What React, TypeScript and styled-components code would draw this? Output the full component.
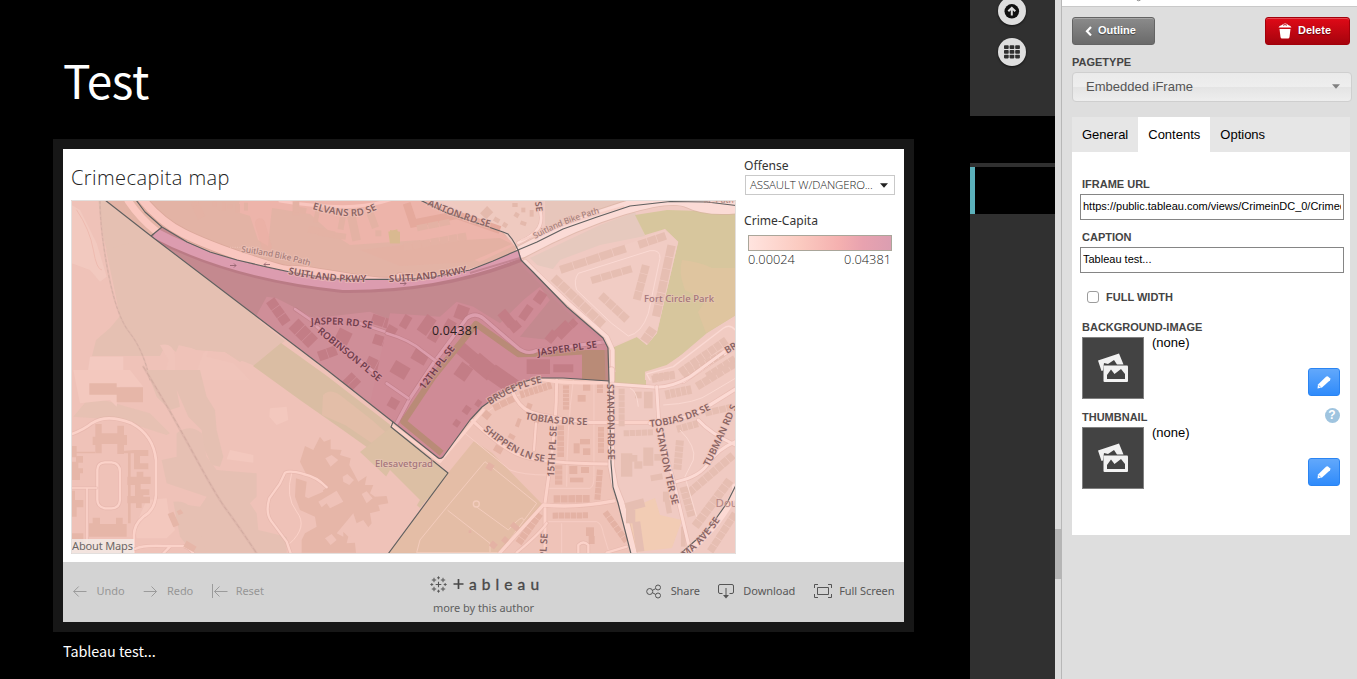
import React from "react";
import styled, { createGlobalStyle } from "styled-components";

const GlobalStyle = createGlobalStyle`
  * { box-sizing: border-box; }
  body { margin: 0; background: #000; overflow: hidden; font-family: "Liberation Sans", Arial, sans-serif; }
`;

const source = `"Noto Sans CJK SC", "Noto Sans", sans-serif`;
const viz = `"Noto Sans", "Open Sans", sans-serif`;

const Page = styled.div`
  display: flex;
  width: 1357px;
  height: 679px;
  overflow: hidden;
`;

/* ---------- stage ---------- */

const Stage = styled.main`
  width: 970px;
  padding-left: 53px;
  background: #000;
  color: #fff;
`;
const Heading = styled.h1`
  margin: 0;
  height: 139px;
  padding: 44px 0 0 10px;
  font: 400 46px/70px ${source};
  letter-spacing: -0.4px;
`;
const Frame = styled.section`
  display: flex;
  flex-direction: column;
  width: 861px;
  height: 493px;
  border: 10px solid #171717;
  background: #fff;
`;
const Caption = styled.p`
  margin: 0;
  padding: 7px 0 0 10px;
  font: 400 14.4px/24px ${source};
  letter-spacing: -0.05px;
`;
const Dashboard = styled.div`
  display: flex;
  height: 413px;
`;
const MapColumn = styled.div`
  width: 673px;
  padding-left: 8px;
`;
const MapTitle = styled.h2`
  margin: 0;
  height: 51px;
  font: 300 20px/57px "Open Sans", sans-serif;
  letter-spacing: 0.42px;
  color: #222;
`;
const MapSvg = styled.svg`
  display: block;
`;
const LegendColumn = styled.aside`
  width: 168px;
  padding: 9px 0 0 8px;
  color: #333;
`;
const LegendTitle = styled.div`
  font: 400 12.1px/16px ${viz};
`;
const OffenseSelect = styled.div`
  display: flex;
  align-items: center;
  justify-content: space-between;
  width: 150px;
  height: 20px;
  margin: 1px 0 18px 1px;
  padding: 0 6px 0 4px;
  border: 1px solid #c9c9c9;
  font: 300 11.5px/18px "Open Sans", sans-serif;
  letter-spacing: -0.15px;
  color: #222;
`;
const Ramp = styled.div`
  width: 144px;
  height: 16px;
  margin: 6px 0 0 4px;
  border: 1px solid #aaa69a;
  background: linear-gradient(90deg, #ffe4df, #fbcac0 36%, #f5b1b0 63%, #e8a2af 80%, #db9eb1);
`;
const RampScale = styled.div`
  display: flex;
  justify-content: space-between;
  width: 143px;
  margin-left: 4px;
  font: 300 12.8px/17px "Open Sans", sans-serif;
  color: #222;
`;

const Toolbar = styled.footer`
  display: flex;
  align-items: center;
  height: 60px;
  background: #d3d3d3;
  color: #606060;
  font: 400 11px/16px "Noto Sans", sans-serif;
  letter-spacing: -0.05px;
`;
const ToolGroup = styled.div<{ $w: number; $end?: boolean }>`
  display: flex;
  width: ${(p) => p.$w}px;
  justify-content: ${(p) => (p.$end ? "flex-end" : "flex-start")};
  padding: 0 9.5px 2px;
  gap: 18.4px;
`;
const Tool = styled.div<{ $muted?: boolean; $gap: number }>`
  display: flex;
  align-items: center;
  gap: ${(p) => p.$gap}px;
  color: ${(p) => (p.$muted ? "#969696" : "#585858")};
  white-space: nowrap;
`;
const Brand = styled.div`
  width: 112px;
  height: 60px;
  padding: 12px 0 0 1px;
`;
const Wordmark = styled.div`
  display: flex;
  align-items: center;
  height: 20px;
  color: #484848;
`;
const Letters = styled.span`
  display: flex;
  width: 70px;
  margin-left: 5px;
  justify-content: space-between;
  font: 400 15.5px/20px Lato, sans-serif;
  -webkit-text-stroke: 0.35px #484848;
`;
const Author = styled.div`
  padding: 6px 0 0 3px;
  white-space: nowrap;
`;

/* ---------- page rail ---------- */

const Rail = styled.nav`
  display: flex;
  flex-direction: column;
  width: 85px;
  background: #303030;
`;
const RailTools = styled.div`
  display: flex;
  flex-direction: column;
  align-items: center;
  gap: 13px;
  height: 119px;
  margin-top: -3px;
  padding-right: 1px;
  svg { filter: drop-shadow(0 1px 1px #111); }
`;
const RailSlide = styled.div<{ $active?: boolean }>`
  height: 47px;
  margin-bottom: 4px;
  background: #000;
  border-left: ${(p) => (p.$active ? "5px solid #5bb0ba" : "0")};
`;
const Splitter = styled.div`
  display: flex;
  flex-direction: column;
  width: 7px;
  padding-top: 529px;
  background: #dcdcdc;
  border-right: 1px solid #b7b7b7;
`;
const Grip = styled.div`
  width: 7px;
  height: 50px;
  background: #b5b5b5;
`;

/* ---------- inspector ---------- */

const Inspector = styled.aside`
  width: 295px;
  background: #dedede;
`;
const Strip = styled.div`
  height: 7px;
  padding-left: 74px;
  background: #fff;
  border-bottom: 1px solid #c9c9c9;
  svg { display: block; }
`;
const Actions = styled.div`
  display: flex;
  justify-content: space-between;
  padding: 10px 7px 0 10px;
`;
const Button = styled.button<{ $danger?: boolean }>`
  display: flex;
  align-items: center;
  gap: 6px;
  width: ${(p) => (p.$danger ? 85 : 83)}px;
  height: 28px;
  padding: 0 0 2px 12px;
  border: 1px solid ${(p) => (p.$danger ? "#a3000a" : "#646464")};
  border-radius: 3px;
  background: ${(p) => (p.$danger ? "linear-gradient(#e00a17, #a5030d)" : "linear-gradient(#8b8b8b, #6a6a6a)")};
  box-shadow: inset 0 1px 0 rgba(255, 255, 255, 0.25);
  color: #fff;
  font: 700 11px/14px "Liberation Sans", Arial, sans-serif;
  text-shadow: 0 1px 1px rgba(0, 0, 0, 0.45);
  svg { margin-top: 2px; }
`;
const Label = styled.div<{ $top?: number }>`
  margin-top: ${(p) => p.$top ?? 0}px;
  font: 700 11px/14px "Liberation Sans", Arial, sans-serif;
  color: #444;
`;
const TypeField = styled.div`
  padding: 10px 0 0 10px;
`;
const TypeSelect = styled.div`
  display: flex;
  align-items: center;
  justify-content: space-between;
  width: 280px;
  height: 30px;
  margin-top: 3px;
  padding: 0 11px 1px 13px;
  border: 1px solid #cfcfcf;
  border-radius: 4px;
  background: linear-gradient(#eaeaea, #eeeeee 50%, #e4e4e4 51%, #eeeeee);
  font-size: 13px;
  color: #555;
`;
const Tabs = styled.div`
  display: flex;
  width: 278px;
  height: 35px;
  margin: 15px 0 0 10px;
  background: #e6e6e6;
`;
const Tab = styled.div<{ $active?: boolean }>`
  padding: 0 10px;
  background: ${(p) => (p.$active ? "#fff" : "transparent")};
  font-size: 13px;
  line-height: 35px;
  color: #000;
`;
const Sheet = styled.div`
  width: 278px;
  height: 383px;
  margin-left: 10px;
  padding: 25px 6px 0 10px;
  background: #fff;
`;
const Input = styled.div`
  width: 264px;
  height: 26px;
  margin: 3px 0 0 -2px;
  padding: 0 2px;
  border: 1px solid #858585;
  font-size: 11px;
  line-height: 23px;
  color: #000;
  white-space: nowrap;
  span { display: block; overflow: hidden; }
`;
const CheckRow = styled.label`
  display: flex;
  align-items: center;
  gap: 7px;
  margin: 17px 0 16px 5px;
`;
const CheckBox = styled.span`
  width: 12px;
  height: 12px;
  border: 1px solid #9c9c9c;
  border-radius: 3px;
`;
const ImageHeader = styled.div`
  display: flex;
  justify-content: space-between;
  height: 17px;
  padding-right: 4.500px;
`;
const ImageRow = styled.div`
  display: flex;
  height: 62px;
  margin-bottom: 11px;
`;
const Thumb = styled.div`
  display: flex;
  width: 62px;
  height: 62px;
  border: 1px solid #808080;
  background: #434343;
`;
const None = styled.div`
  flex: 1;
  padding-left: 8px;
  margin-top: -2px;
  font-size: 13px;
  line-height: 16px;
  color: #000;
`;
const EditButton = styled.button`
  display: flex;
  align-items: center;
  justify-content: center;
  width: 32px;
  height: 28px;
  margin: 31px 4px 0 0;
  padding: 0;
  border: 1px solid #2a84f2;
  border-radius: 3px;
  background: linear-gradient(#62a8fb, #2f8bfb);
`;
const Help = styled.div`
  width: 15px;
  height: 15px;
  margin-top: -2px;
  border-radius: 50%;
  background: #9fc4df;
  color: #fff;
  font: 700 12px/15px "Liberation Sans", Arial, sans-serif;
  text-align: center;
`;

/* ---------- map ---------- */

type PathProps = { d: string; c: string; w?: number; o?: number };
const Road = ({ d, c, w = 6, o }: PathProps) => (
  <path d={d} stroke={c} strokeWidth={w} fill="none" strokeLinecap="round" strokeLinejoin="round" opacity={o} />
);
const Cased = ({ d, c, w = 10, edge = "#dfaea4" }: PathProps & { edge?: string }) => (
  <>
    <Road d={d} c={edge} w={w + 4} o={0.45} />
    <Road d={d} c={c} w={w} />
  </>
);
/* rectangular buildings: x, y, width, height, angle */
const Blocks = ({ c, items }: { c: string; items: number[][] }) => (
  <g fill={c}>
    {items.map(([x, y, w, h, a = 0], i) => (
      <rect key={i} x={x - w / 2} y={y - h / 2} width={w} height={h} transform={`rotate(${a} ${x} ${y})`} />
    ))}
  </g>
);
const Row = ({ x1, y1, x2, y2, n, c, s = 20 }: { x1: number; y1: number; x2: number; y2: number; n: number; c: string; s?: number }) => {
  const a = (Math.atan2(y2 - y1, x2 - x1) * 180) / Math.PI;
  const len = Math.hypot(x2 - x1, y2 - y1) / n;
  return (
    <Blocks
      c={c}
      items={Array.from({ length: n }, (_, i) => {
        const t = (i + 0.5) / n;
        return [x1 + (x2 - x1) * t, y1 + (y2 - y1) * t, len - 2, s, a];
      })}
    />
  );
};

type LabelProps = { id: string; d: string; t: string; s?: number; c?: string; halo?: string; len?: number; w?: number };
const RoadLabel = ({ id, d, t, s = 9.7, c = "#8a6564", halo = "#efc5bc", len, w = 600 }: LabelProps) => (
  <>
    <path id={id} d={d} fill="none" />
    <text fontSize={s} fill={c} stroke={halo} strokeWidth={2} strokeOpacity={0.55} paintOrder="stroke" fontWeight={w} textLength={len}>
      <textPath href={`#${id}`} textLength={len}>{t}</textPath>
    </text>
  </>
);

const tract =
  "M151 236L162 227L187 242L210 252L237 260L267 267L290 272L320 277L343 279.3L393 279.3L427 278L470 270L493 261L518.3 250L523 262L533 272L567 307L603 338L608 348L609 381L563 378L537 378L523 382L500 394L482 407L470 420L443 457Q440 460 437 457L397 425L390 419L327 370Z";
const parkway = "M136 200L145 212L162 227L187 242L210 252L237 260L267 267L290 272L320 277L343 279.3L393 279.3L427 278L470 270L493 261L518.3 250";

const MapView = () => {
  const bW = "#e6b6a8";
  const bE = "#e6beb2";
  const bS = "#e4b2a4";
  const bT = "#c37d86";
  const rW = "#fbd2c9";
  const rE = "#fcdad4";
  const rT = "#dc9dac";
  return (
    <MapSvg width="665" height="354" viewBox="71 200 665 354" fontFamily={`"Noto Sans", "Open Sans", sans-serif`}>
      <defs>
        <clipPath id="tract"><path d={tract} /></clipPath>
      </defs>
      <rect x="71" y="200" width="665" height="354" fill="#efc3b8" />

      {/* ground */}
      <path d="M105 200L151 236L327 370L393 422L391 427L448 473L388 554H71V200Z" fill="#efc2b8" />
      <path d="M98 200H105L258 318L270 342L240 362L225 352L196 350L180 342L176 352L166 344L160 356H92L96 340L110 328L120 316L108 255L104 240Z" fill="#e5c0b2" />
      <path d="M151 236L285 341L255 366L240 360L225 352L200 350L178 345L168 350L150 352L120 315L106 250Z" fill="#e5c0b2" />
      <path d="M281 343L327 376L393 427L448 473L430 500L385 460L340 428L300 400L253 366Z" fill="#dabda3" />
      <path d="M323 395Q330 388 340 395L372 420L400 445L385 452L345 425L322 415Z" fill="#e3bea8" />
      <path d="M105 200H426L447 213L477 223L503 232L512 238L518 250L470 272L343 282L210 254L162 228L151 236Z" fill="#e3b3a5" />
      <path d="M240 200H440L500 231L515 245L480 262L420 240L350 245L330 232L310 214L272 208L268 246L258 240L250 216L237 212Z" fill="#edb4aa" />
      <path d="M430 242L500 238L512 244L470 262L400 266L360 250Z" fill="#e4b1a3" />
      <path d="M426 200H736V554H630L618 503L612 487L609 380L603 338L567 307L523 262L518 250L503 232Z" fill="#f0cac2" />
      <path d="M450 200H545L540 225L518 243L505 230L470 218Z" fill="#efcac0" />
      <path d="M545 200H640L560 228L545 232Z" fill="#e7c6bb" />
      <path d="M530 258L600 225L635 212L645 236L600 245L560 260L548 275Z" fill="#e6c9be" />
      <path d="M635 215L667 210L736 212V315L707 333L667 367L646 372L644 382H617L612 348L637 337L647 345L657 333L678 242L665 229L645 235Z" fill="#d7c69d" />
      <path d="M682 260Q700 262 712 268H736V315L706 333L698 312L706 300L685 290Q678 272 682 260Z" fill="#dfc59f" />
      <path d="M608 372H646V385H612Z" fill="#d7c69d" />
      <path d="M474 441L492 453L543 505L500 554H388L448 473Z" fill="#e4bda6" />
      <path d="M391 427L448 473L420 508L390 480L360 452Z" fill="#dcbfa4" />
      <path d="M390 470L420 500L388 554H340Z" fill="#efc2b8" />
      <path d="M626 510L655 498L660 515L682 520L672 548L636 552Z" fill="#f2ccb4" />

      {/* north-west tile */}
      <g transform="translate(60 190) scale(.3333)">
        <path d="M35 45L60 60L90 120L110 160L140 260L120 275L90 240L35 220Z" fill="#f3cbc1" opacity=".8" />
        <path d="M90 500H190V570H80Z" fill="#f3c9c0" />
        <path d="M300 465Q340 455 345 500V570H310L325 510ZM430 490Q450 470 440 500L520 520L570 570H400Z" fill="#f0c4ba" />
        <Road d="M50 60Q90 120 100 180T125 240" c="#eebbb0" w={3} />
        <Road d="M120 33Q120 120 145 250T210 430T270 570" c="#d8b0a5" w={5} o={0.5} />
        <path d="M120 33Q120 120 145 250T210 430T270 570" stroke="#ccaaa0" strokeWidth="2" strokeDasharray="9 7" fill="none" />
        <Road d="M205 33Q240 85 290 125T420 195" c="#fbc8c0" w={22} />
        <Road d="M240 20Q300 95 370 130T560 205T690 240T860 262T1020 262" c="#d69d92" w={30} o={0.5} />
        <Road d="M240 20Q300 95 370 130T560 205T690 240T860 262T1020 262" c="#f9c6bf" w={25} />
        <Road d="M660 33Q760 50 850 50T1020 20" c="#f9c6bf" w={9} />
        <Road d="M600 100L620 170" c="#eaaea1" w={30} o={0.5} />
        <Blocks c={bS} items={[[415, 62, 24, 48, -25], [405, 42, 20, 12, -10], [464, 42, 14, 14], [492, 50, 12, 24], [510, 50, 16, 12], [533, 55, 14, 26], [558, 50, 12, 24], [708, 55, 20, 42], [720, 60, 38, 18, 10], [770, 78, 14, 40, 10], [768, 122, 46, 20, 10], [800, 130, 50, 20, 10], [840, 138, 36, 18, 8], [845, 100, 18, 38, 10], [882, 115, 26, 76, -12], [938, 90, 22, 50, -20], [955, 130, 18, 18]]} />
        <path d="M985 125L1012 118L1020 160L990 160Z" fill="#d9b990" />
        <path d="M510 172H590" stroke="#f2cabf" strokeWidth="2" strokeDasharray="3 4" />
      </g>

      {/* north-east tile */}
      <g transform="translate(390 190) scale(.3333)">
        <path d="M0 120L30 125V160H0Z" fill="#d9b990" />
        <path d="M50 40L70 100L200 75L330 120" stroke="#e5a99c" strokeWidth="24" fill="none" />
        <Row x1={40} y1={172} x2={230} y2={138} n={7} c={bS} s={22} />
        <Row x1={80} y1={115} x2={180} y2={95} n={3} c={bS} s={18} />
        <Blocks c="#e4b9ac" items={[[290, 68, 26, 30, 45], [320, 90, 18, 14, 30], [345, 105, 14, 14, 30], [375, 45, 16, 12], [400, 60, 12, 14], [400, 100, 18, 12, 20], [425, 70, 12, 20], [380, 75, 14, 14, 30]]} />
        <Cased d="M445 40Q462 90 445 115T385 158" c={rE} w={8} />
        <Road d="M395 185Q550 100 700 55T900 36T1060 50" c="#d8b0a2" w={43} o={0.6} />
        <Road d="M395 185Q550 100 700 55T900 36T1060 50" c="#fbdbd6" w={37} />
        <Road d="M395 150Q540 95 700 50" c="#f6cfc7" w={6} />
        <Road d="M230 245L330 215L385 185" c="#f9c6bf" w={12} />
        <path d="M400 215L500 240L745 150L825 118L865 155L800 430L770 465L740 440L660 470L640 440Z" fill="#f1ccc4" />
        <Row x1={510} y1={240} x2={708} y2={175} n={5} c={bE} s={24} />
        <Row x1={745} y1={165} x2={828} y2={137} n={3} c={bE} s={24} />
        <Row x1={603} y1={272} x2={726} y2={236} n={4} c={bE} s={22} />
        <Row x1={490} y1={262} x2={640} y2={405} n={7} c={bE} s={26} />
        <Row x1={632} y1={315} x2={712} y2={390} n={4} c={bE} s={24} />
        <Row x1={768} y1={225} x2={740} y2={330} n={4} c={bE} s={24} />
        <Row x1={845} y1={165} x2={798} y2={380} n={6} c={bE} s={25} />
        <Row x1={790} y1={415} x2={762} y2={455} n={2} c={bE} s={28} />
        <path d="M565 250L780 182Q812 178 810 205L775 370Q755 430 715 438L665 400L560 300Q550 270 565 250Z" fill="none" stroke="#fad9d3" strokeWidth="3" />
        <Cased d="M405 215L440 250L535 340L650 440L668 480V570" c={rE} w={12} />
        <path d="M765 545L830 525L1036 385V570H765Z" fill="#f1cbc2" />
        <Row x1={790} y1={562} x2={855} y2={552} n={4} c={bE} s={20} />
        <Row x1={870} y1={548} x2={1010} y2={450} n={8} c={bE} s={24} />
        <Row x1={950} y1={560} x2={1036} y2={505} n={5} c={bE} s={22} />
        <Road d="M780 570L770 552L850 530L1000 415Q1020 400 1036 420" c="#fad9d3" w={4} />
        <Cased d="M880 575L990 500L1040 470" c={rE} w={9} />
      </g>

      {/* south-west tile */}
      <g transform="translate(60 370) scale(.3333)">
        <path d="M90 80L150 95L200 110L270 130L330 190L320 195L180 150L40 140Z" fill="#e5c0b2" opacity=".8" />
        <path d="M260 0H420L440 80L465 120L470 180L490 260L480 290L455 285L430 230L425 180L385 140L350 60L360 110L330 120L290 80Z" fill="#e5c0b2" />
        <path d="M350 190Q390 160 425 190L440 260L470 300L590 310V380L570 400L590 430L595 480L680 500V548H440L400 530L350 450L345 400L420 410L440 380L320 340L305 270L350 260Z" fill="#e6c0b3" />
        <path d="M340 395Q390 390 400 430L440 548H400L360 500Z" fill="#e6c0b3" />
        <path d="M225 470L260 390L320 385L325 420L345 480L320 505H230ZM630 115L680 110L685 150L650 165L628 140ZM510 240L580 255V278L500 268ZM40 0H210L250 50H180L170 110L150 90L60 100Z" fill="#f3c8be" />
        <Road d="M250 -10Q330 120 400 250T500 420T590 550" c="#d9b1a6" w={7} o={0.6} />
        <path d="M250 -10Q330 120 400 250T500 420T590 550" stroke="#cfa89d" strokeWidth="2.5" strokeDasharray="14 8" fill="none" />
        <path d="M88 40H170V52H249V97H170V74H88Z" fill={bW} />
        <path d="M106 162H125V190H172V167H192V195H201V225H192V252H172V222H125V250H106V225H98V200H106Z" fill={bW} />
        <path d="M36 228H50V245H105V250H50V262H36ZM48 258H69V278H55V295H69V310H60V330H36V275H48ZM222 240H265V258H240V280H265V298H222V250H180V244ZM202 320H230V305H250V320H272V342H242V358H268V375H250V380H270V400H245V414H228V400H202V378H225V345H202ZM36 362H45V390H70V412H50V440H36ZM87 460H98V443H120V462H168V443H188V462H200V500H87ZM36 490H70V520H36ZM204 250H212V460H204Z" fill={bW} />
        <Cased d="M36 192Q70 180 95 160Q140 130 215 160Q280 195 288 270V375Q285 420 250 440Q220 465 222 500V548" c={rW} w={8} />
        <Cased d="M112 300Q112 278 135 277H155Q180 280 180 305V390Q178 415 155 415H135Q112 410 112 390Z" c={rW} w={7} />
        <Cased d="M36 354H110M81 356V540" c={rW} w={5} />
        <Cased d="M225 537Q250 525 310 528H370Q390 535 400 550M330 530L310 550" c={rW} w={7} />
        <path d="M323 432L340 425L358 465L340 472ZM350 424L362 418L370 430L356 436ZM380 512L410 530L400 546L370 530Z" fill={bW} />
        <path d="M735 228L760 240L780 200L792 215L812 208V238L845 240L840 255L872 265L868 285L895 335L920 318L915 345L940 345L930 370L945 380L980 378L985 400L955 405L960 422L930 430L935 460L925 472L910 450L890 460L880 430L830 490L850 500V485L865 500L860 520L885 518L888 548H725V510L735 490L770 470L765 440L720 420L705 380L708 325L740 335L735 380L790 360L805 350L765 322L740 315L720 275Z" fill={bW} />
        <path d="M796 265L815 255L835 270L812 290ZM848 320L862 312L882 330L868 345L850 335ZM905 372L920 364L938 385L920 400ZM795 505L815 492L830 510L812 525ZM775 395L830 362L850 395L810 415L800 400L785 412ZM735 380L785 345L790 365L745 385Z" fill="#efc2b8" />
        <Road d="M695 310Q675 380 710 425T690 520" c={rW} w={3} />
        <Cased d="M800 352Q770 320 730 312Q690 300 675 308L660 340L628 385Q615 430 635 455L680 515L692 550" c={rW} w={7} />
      </g>

      {/* south-east tile */}
      <g transform="translate(390 370) scale(.3333)">
        <path d="M285 275L440 400L330 548H80L90 510L180 400Z" fill="none" stroke="#f3ccbd" strokeWidth="3" />
        <path d="M173 421L300 520V548M260 411L355 480Q400 430 400 450" fill="none" stroke="#f3ccbd" strokeWidth="3" />
        <circle cx="259" cy="402" r="9" fill="none" stroke="#f3ccbd" strokeWidth="4" />
        <path d="M225 190L360 300Q400 315 470 315M285 130Q350 80 410 70M550 30Q530 180 530 350M470 355H600Q612 350 612 320V40M475 455H620Q635 460 640 490L655 540M515 460V548" fill="none" stroke="#f6cdc4" strokeWidth="3" />
        <Row x1={390} y1={75} x2={485} y2={45} n={7} c={bS} s={22} />
        <Row x1={310} y1={115} x2={372} y2={85} n={3} c={bS} s={20} />
        <Row x1={528} y1={45} x2={528} y2={120} n={6} c={bS} s={18} />
        <Row x1={512} y1={165} x2={512} y2={262} n={6} c={bS} s={20} />
        <Row x1={506} y1={285} x2={506} y2={345} n={4} c={bS} s={22} />
        <Row x1={630} y1={40} x2={630} y2={70} n={2} c={bS} s={18} />
        <Row x1={633} y1={170} x2={633} y2={250} n={5} c={bS} s={18} />
        <Row x1={630} y1={298} x2={622} y2={390} n={5} c={bS} s={18} />
        <Row x1={490} y1={387} x2={600} y2={386} n={5} c={bS} s={22} />
        <Row x1={487} y1={437} x2={595} y2={436} n={6} c={bS} s={18} />
        <Row x1={645} y1={425} x2={710} y2={515} n={6} c={bS} s={18} />
        <Row x1={385} y1={520} x2={450} y2={430} n={6} c={bS} s={22} />
        <Blocks c={bS} items={[[290, 135, 22, 22, 40], [325, 238, 26, 20, 30], [418, 108, 16, 16, 20], [440, 150, 14, 20], [365, 200, 20, 14, 30], [385, 158, 12, 26, 20], [590, 50, 22, 24], [575, 85, 24, 20], [585, 215, 30, 16], [560, 235, 18, 30], [590, 245, 22, 20], [550, 300, 24, 24], [585, 300, 24, 18], [560, 330, 40, 14], [600, 485, 24, 26], [605, 510, 18, 24], [375, 470, 26, 16, 40], [300, 290, 20, 20, 30], [310, 525, 20, 18, 40], [345, 510, 16, 18, 40], [240, 485, 8, 8]]} />
        <Cased d="M500 30Q500 160 480 290L465 400V548" c={rW} w={9} />
        <Cased d="M365 60Q385 110 420 125T600 157H780" c={rW} w={10} />
        <Cased d="M240 145Q340 240 400 260T655 282" c={rW} w={9} />
        <Cased d="M330 548L460 405Q560 415 672 393" c={rW} w={10} />
        <Cased d="M438 160L432 240M380 548Q450 490 470 460M565 548V525Q580 510 595 525V548M650 548L710 530" c={rW} w={7} />
        <Road d="M275 110Q310 75 360 45T460 28T655 38" c={rW} w={10} />
        <Road d="M5 165L150 275L170 250L280 120" c={rW} w={9} />
        <Road d="M664 0V290L675 350L695 400L732 550" c="#dfb0a5" w={22} o={0.5} />
        <Road d="M664 0V290L675 350L695 400L732 550" c={rE} w={17} />
        <Row x1={695} y1={55} x2={695} y2={170} n={6} c={bE} s={18} />
        <Row x1={700} y1={190} x2={790} y2={187} n={5} c={bE} s={18} />
        <Row x1={785} y1={28} x2={855} y2={15} n={4} c={bE} s={22} />
        <Row x1={880} y1={20} x2={1000} y2={-50} n={7} c={bE} s={22} />
        <Row x1={825} y1={75} x2={905} y2={58} n={5} c={bE} s={26} />
        <Row x1={920} y1={50} x2={1036} y2={-20} n={6} c={bE} s={24} />
        <Row x1={860} y1={178} x2={925} y2={160} n={4} c={bE} s={22} />
        <Row x1={945} y1={130} x2={1030} y2={110} n={4} c={bE} s={20} />
        <Row x1={870} y1={210} x2={862} y2={300} n={5} c={bE} s={24} />
        <Row x1={895} y1={370} x2={1030} y2={255} n={8} c={bE} s={24} />
        <Row x1={880} y1={350} x2={905} y2={440} n={5} c={bE} s={24} />
        <Row x1={915} y1={470} x2={1020} y2={330} n={8} c={bE} s={26} />
        <Row x1={960} y1={545} x2={1036} y2={430} n={6} c={bE} s={22} />
        <Blocks c={bE} items={[[745, 75, 20, 20], [775, 90, 26, 50], [710, 285, 34, 70], [730, 265, 24, 20], [775, 260, 30, 55], [745, 285, 24, 22], [800, 322, 36, 18, -10], [828, 380, 18, 30], [835, 410, 16, 40, -10], [735, 405, 58, 26, -15], [722, 440, 28, 40], [745, 500, 24, 90, -8], [880, 500, 14, 60], [808, 262, 30, 20]]} />
        <path d="M820 105Q920 100 960 70L1036 25M870 180Q920 230 910 270L885 320L920 440M720 55Q740 60 745 110" fill="none" stroke="#f9d8d1" strokeWidth="3" />
        <Cased d="M665 42L800 52Q850 50 900 20L1010 -60" c={rE} w={9} />
        <Cased d="M800 50L808 180L850 330L895 520L905 548" c={rE} w={9} />
        <Cased d="M780 160Q900 150 960 105L1040 55" c={rE} w={10} />
        <Cased d="M860 335Q930 320 955 280T1036 215M925 150Q960 190 1036 225" c={rE} w={9} />
        <Road d="M880 560Q960 490 1000 430T1036 350" c={rE} w={20} />
      </g>

      {/* highlighted tract */}
      <g clipPath="url(#tract)">
        <path d={tract} fill="#c4898f" />
        <g transform="translate(60 190) scale(.3333)">
          <path d="M590 375L620 320L650 325L700 350L760 385L930 365L1020 400L1100 395L1200 560L1060 800L560 560Z" fill="#cf8e98" />
          <Row x1={630} y1={330} x2={680} y2={400} n={3} c={bT} s={30} />
          <Row x1={700} y1={400} x2={760} y2={460} n={3} c={bT} s={42} />
          <Row x1={775} y1={500} x2={830} y2={480} n={2} c={bT} s={30} />
          <Row x1={935} y1={385} x2={1010} y2={410} n={2} c={bT} s={30} />
          <Row x1={940} y1={445} x2={1000} y2={465} n={2} c={bT} s={30} />
          <Row x1={830} y1={430} x2={870} y2={450} n={1} c={bT} s={40} />
          <Row x1={920} y1={510} x2={980} y2={540} n={2} c={bT} s={30} />
          <Row x1={860} y1={560} x2={890} y2={590} n={2} c={bT} s={40} />
          <Cased d="M705 357L760 395M900 400L1020 440L1120 490" c={rT} w={8} edge="#b5757f" />
          <Cased d="M770 410L960 560L1020 610L1060 640" c={rT} w={8} edge="#b5757f" />
        </g>
        <g transform="translate(390 190) scale(.3333)">
          <path d="M0 370L150 380L200 335L250 350L330 400L400 330L450 290L480 330L390 440L480 450L560 385L650 450V600H500L300 640L150 820L-60 640Z" fill="#cf8b96" />
          <Blocks c={bT} items={[[215, 368, 38, 42, 20], [180, 405, 30, 30, 30], [47, 395, 24, 40, 30], [110, 405, 34, 56, 35], [5, 420, 30, 24, 30], [350, 385, 30, 50, -40], [375, 410, 32, 26, -40], [408, 368, 24, 46, 35], [450, 322, 28, 36, 35], [520, 420, 50, 34, -45], [485, 440, 26, 36, 40], [550, 400, 20, 22, -45], [520, 535, 60, 24], [445, 530, 70, 44], [230, 490, 60, 40, 40], [280, 530, 70, 50, 40], [340, 570, 90, 50, 35], [220, 545, 40, 46, 35], [90, 500, 46, 36, 30], [130, 440, 30, 26, 30], [30, 540, 50, 40, 30], [230, 660, 20, 24, 35], [200, 700, 18, 20, 35], [265, 640, 16, 20, 35], [10, 640, 30, 30, 30]]} />
          <path d="M155 790L40 695L130 560L258 402L385 492L480 490L580 484" stroke="#b98b77" strokeWidth="19" strokeLinejoin="round" fill="none" />
          <path d="M576 480H665V578L576 568Z" fill="#b98b77" />
          <Road d="M20 700L60 625L130 520L230 385Q255 365 280 385L385 475Q410 495 440 482L650 455" c="#b5757f" w={14} o={0.5} />
          <Road d="M20 700L60 625L130 520L230 385Q255 365 280 385L385 475Q410 495 440 482L650 455" c={rT} w={10} />
          <Cased d="M-10 430Q60 450 100 485L140 515M-10 580L55 625" c={rT} w={8} edge="#b5757f" />
        </g>
        <path d="M155 234Q230 275 343 287Q440 288 520 256" fill="none" stroke="#b4717f" strokeWidth="12" opacity=".6" />
        <path d="M155 233Q230 273 343 285Q440 286 520 253" fill="none" stroke="#dc9caf" strokeWidth="10" />
        <path d="M470 273L520 258" stroke="#c48593" strokeWidth="2" />
      </g>
      <path d="M523 262L533 272L567 307L603 338L608 348L609 380" fill="none" stroke="#c98a96" strokeWidth="3" opacity=".5" transform="translate(-2 1)" />

      {/* tract outlines */}
      <g fill="none" stroke="#5f5f5f" strokeWidth="1.15" strokeLinejoin="round">
        <path d="M105 200L151 236L162 227M151 236L327 370L393 422L391 427L448 473L388 554" />
        <path d="M393 422L437 457Q440 460 443 457L470 420L482 407L500 394L523 382L537 378L563 378L609 381" />
        <path d={parkway} />
        <path d="M518 250L537 242L563 229L597 217L630 206L670 201.5L707 202L736 205.5" />
        <path d="M420 200L447 213L477 223L503 232L508 234L512 239L515 244L518 250L521 260L533 272L567 307L603 338L608 348L609 381L611 463L613 487L618 503L631 554" />
        <path d="M680 554L696 540L710 527L727 503L736 485" />
      </g>

      {/* labels */}
      <RoadLabel id="l1" d="M312 209Q345 219 362 215T386 202" t="ELVANS RD SE" len={67} />
      <RoadLabel id="l2" d="M427 205Q444 213 462 219T496 229" t="ANTON RD SE" len={66} />
      <RoadLabel id="l3" d="M241 252Q280 257 313 267" t="Suitland Bike Path" s={8.5} c="#a67e7b" w={500} len={70} />
      <RoadLabel id="l4" d="M288 274Q330 283 369 282" t="SUITLAND PKWY" c="#82555a" len={79} />
      <RoadLabel id="l5" d="M389 282Q430 281 470 272" t="SUITLAND PKWY" c="#82555a" len={79} />
      <RoadLabel id="l6" d="M535 239Q565 222 604 212" t="Suitland Bike Path" s={8.5} c="#a6827c" w={500} len={70} />
      <RoadLabel id="l7" d="M535 202L537 216" t="SE" s={9} />
      <RoadLabel id="l8" d="M311 325Q345 323 373 329" t="JASPER RD SE" c="#713f4d" halo="#d793a1" len={61} />
      <RoadLabel id="l9" d="M317 332L381 384" t="ROBINSON PL SE" c="#713f4d" halo="#d793a1" len={79} />
      <RoadLabel id="l10" d="M424 390L457 346" t="12TH PL SE" c="#713f4d" halo="#d793a1" len={52} />
      <RoadLabel id="l11" d="M538 356L600 347" t="JASPER PL SE" c="#713f4d" halo="#d793a1" len={60} />
      <RoadLabel id="l12" d="M490 405Q515 388 545 382" t="BRUCE PL SE" len={57} />
      <RoadLabel id="l13" d="M525 419Q555 425 592 425" t="TOBIAS DR SE" len={63} />
      <RoadLabel id="l14" d="M483 430Q520 462 548 462" t="SHIPPEN LN SE" len={70} />
      <RoadLabel id="l15" d="M554 477L557 424" t="15TH PL SE" len={51} />
      <RoadLabel id="l16" d="M607 384L608 462" t="STANTON RD SE" len={76} />
      <RoadLabel id="l17" d="M650 427Q685 424 715 407" t="TOBIAS DR SE" len={64} />
      <RoadLabel id="l18" d="M656 428Q663 470 673 508" t="STANTON TER SE" len={79} />
      <RoadLabel id="l19" d="M709 467Q723 440 738 404" t="TUBMAN RD S" len={67} />
      <RoadLabel id="l20" d="M546 558L548 530" t="PL SE" />
      <RoadLabel id="l21" d="M685 558Q708 540 724 514" t="MA AVE SE" len={52} />
      <RoadLabel id="l22" d="M727 354L742 345" t="BR" />
      <g stroke="#eec9c0" strokeWidth="1.5" strokeOpacity=".5" paintOrder="stroke" fill="#a3757a" fontWeight="500">
        <text x="644" y="301.5" fontSize="9.5" textLength="70">Fort Circle Park</text>
        <text x="375" y="467" fontSize="9.5" textLength="58">Elesavetgrad</text>
        <text x="715.5" y="507" fontSize="11.5" fill="#b38583" fontWeight="400">Dou</text>
      </g>
      <text x="704" y="203" fontSize="8.5" fill="#a6827c">ke Path</text>
      <path d="M230 265.5h6m-2-2l2 2l-2 2M270 264.5h-6m2-2l-2 2l2 2M400 283.5h6m-2-2l2 2l-2 2" stroke="#8c5d68" strokeWidth=".8" fill="none" />
      <text x="432" y="335" fontSize="12.3" fontWeight="400" fill="#2b1d20" fontFamily={`"Open Sans", sans-serif`} textLength="47">0.04381</text>

      <rect x="71" y="539" width="63" height="14" fill="#f4ece8" fillOpacity=".8" />
      <text x="72" y="550" fontSize="11" fill="#6c6665" textLength="61">About Maps</text>
      <path d="M71.5 200.5H735.5V553.5H71.5Z" fill="none" stroke="#e3dfdd" />
    </MapSvg>
  );
};

/* ---------- icons ---------- */

const Arrow = ({ right, bar }: { right?: boolean; bar?: boolean }) => (
  <svg width="16" height="16" viewBox="0 0 16 16" fill="none" stroke="#9b9b9b">
    {bar && <path d="M.5 1V15" />}
    <path transform={right ? "translate(14.2 0) scale(-1 1)" : undefined} d={bar ? "M2.5 8.5H15.5M7.5 3.5L2.5 8.5L7.5 13.5" : "M.7 8.5H13.5M5.7 3.5L.7 8.5L5.7 13.5"} />
  </svg>
);
const ShareIcon = () => (
  <svg width="16" height="16" viewBox="0 0 16 16" fill="none" stroke="#555">
    <circle cx="3.7" cy="8.5" r="3" /><circle cx="12" cy="4.5" r="2.5" /><circle cx="12" cy="12.5" r="2.5" />
    <path d="M6.5 7.3L9.7 5.6M6.5 9.7L9.7 11.5" />
  </svg>
);
const DownloadIcon = () => (
  <svg width="16" height="16" viewBox="0 0 16 16" fill="none" stroke="#555">
    <path d="M4.5 10.5H2Q.5 10.5 .5 9V3Q.5 1.5 2 1.5H14Q15.5 1.5 15.5 3V9Q15.5 10.5 14 10.5H11.5M8 5V13" />
    <path d="M5 12H11L8 15.5Z" fill="#555" stroke="none" />
  </svg>
);
const FullIcon = () => (
  <svg width="18" height="16" viewBox="0 0 18 16" fill="none" stroke="#555">
    <path d="M.5 5V1.5H4M14 1.5H17.5V5M17.5 11V14.5H14M4 14.5H.5V11M3.5 4.5H14.5V11.5H3.5Z" />
  </svg>
);
const plus = (x: number, y: number, r: number) => `M${x - r} ${y}H${x + r}M${x} ${y - r}V${y + r}`;
const TableauMark = () => (
  <svg width="17" height="17" viewBox="0 0 17 17" fill="none" stroke="#555">
    <path d={plus(8.5, 8.5, 2.8)} strokeWidth="1.1" />
    <path d={[[4, 4], [13, 4], [4, 13], [13, 13]].map(([x, y]) => plus(x, y, 2.2)).join("")} />
    <path d={[[8.5, 1.8], [8.5, 15.2], [1.8, 8.5], [15.2, 8.5]].map(([x, y]) => plus(x, y, 1.5)).join("")} strokeWidth=".9" />
  </svg>
);
const PlusMark = () => (
  <svg width="17" height="12" viewBox="0 0 17 12" fill="none" stroke="#484848">
    <path d={plus(11.5, 6, 5)} strokeWidth="1.7" />
  </svg>
);
const Photos = () => (
  <svg width="60" height="60" viewBox="0 0 60 60">
    <path d="M15 22.5L36 15.5L40.5 26.5H34L31 22L25 26L21 25L20 32.5L18.5 33Z" fill="#f2f2f2" />
    <path d="M21 27.500H44Q45 27.500 45 28.500V43Q45 44 44 44H21.500Q20.500 44 20.500 43V28Z" fill="#f2f2f2" />
    <path d="M24 41V37L28 31.500L31.500 36L38 31L42 36V41Z" fill="#434343" />
  </svg>
);
const Pencil = () => (
  <svg width="16" height="16" viewBox="0 0 16 16">
    <path d="M1.500 14.500L2 10.500L10 2.700Q11 1.800 12 2.500L14 4.200Q14.700 5.200 14 6.200L6 13.500Z" fill="#fff" />
    <path d="M2.800 11.600L4.600 13.100" stroke="#4798fb" strokeWidth=".9" />
  </svg>
);
const Trash = () => (
  <svg width="14" height="16" viewBox="0 0 14 16" fill="#fff">
    <path d="M1.500 6H12.500L11.500 14Q11.300 15.500 10 15.500H4Q2.700 15.500 2.500 14Z" />
    <path d="M.5 4.500Q1 2.500 4 2Q5 .3 7.500 .5Q9.500 .5 10 2Q13 2.500 13.500 4.500Z" />
    <path d="M5 2.200Q7 1 9 2.200" stroke="#c00813" fill="none" />
  </svg>
);
const Caret = ({ c }: { c: string }) => (
  <svg width="8" height="5" viewBox="0 0 8 5"><path d="M0 .3H8L4 4.800Z" fill={c} /></svg>
);
const UpDisc = () => (
  <svg width="28" height="28" viewBox="0 0 28 28">
    <circle cx="14" cy="14" r="14" fill="#dedede" />
    <circle cx="13.8" cy="14.3" r="7.3" fill="#111" />
    <path d="M13.8 18.5V11.5M10.3 14.3L13.8 10.8L17.3 14.3" stroke="#dedede" strokeWidth="2" fill="none" />
  </svg>
);
const GridDisc = () => (
  <svg width="28" height="28" viewBox="0 0 28 28">
    <circle cx="14" cy="14" r="14" fill="#dedede" />
    {[0, 1, 2].flatMap((r) => [0, 1, 2].map((c) => (
      <rect key={`${r}${c}`} x={6 + c * 5.6} y={7.3 + r * 4.7} width="4.7" height="3.7" rx=".8" fill="#303030" />
    )))}
  </svg>
);

const ImageField = ({ label, help }: { label: string; help?: boolean }) => (
  <>
    <ImageHeader><Label>{label}</Label>{help && <Help>?</Help>}</ImageHeader>
    <ImageRow>
      <Thumb><Photos /></Thumb>
      <None>(none)</None>
      <EditButton aria-label="Edit"><Pencil /></EditButton>
    </ImageRow>
  </>
);

export default function App() {
  return (
    <Page>
      <GlobalStyle />
      <Stage>
        <Heading>Test</Heading>
        <Frame>
          <Dashboard>
            <MapColumn>
              <MapTitle>Crimecapita map</MapTitle>
              <MapView />
            </MapColumn>
            <LegendColumn>
              <LegendTitle>Offense</LegendTitle>
              <OffenseSelect>ASSAULT W/DANGERO...<Caret c="#222" /></OffenseSelect>
              <LegendTitle>Crime-Capita</LegendTitle>
              <Ramp />
              <RampScale><span>0.00024</span><span>0.04381</span></RampScale>
            </LegendColumn>
          </Dashboard>
          <Toolbar>
            <ToolGroup $w={366}>
              <Tool $muted $gap={8}><Arrow />Undo</Tool>
              <Tool $muted $gap={8}><Arrow right />Redo</Tool>
              <Tool $muted $gap={8}><Arrow bar />Reset</Tool>
            </ToolGroup>
            <Brand>
              <Wordmark>
                <TableauMark />
                <PlusMark />
                <Letters>
                  {["a", "b", "l", "e", "a", "u"].map((ch, i) => <span key={i}>{ch}</span>)}
                </Letters>
              </Wordmark>
              <Author>more by this author</Author>
            </Brand>
            <ToolGroup $w={363} $end>
              <Tool $gap={9}><ShareIcon />Share</Tool>
              <Tool $gap={9}><DownloadIcon />Download</Tool>
              <Tool $gap={7.5}><FullIcon />Full Screen</Tool>
            </ToolGroup>
          </Toolbar>
        </Frame>
        <Caption>Tableau test...</Caption>
      </Stage>
      <Rail>
        <RailTools><UpDisc /><GridDisc /></RailTools>
        <RailSlide />
        <RailSlide $active />
      </Rail>
      <Splitter><Grip /></Splitter>
      <Inspector>
        <Strip>
          <svg width="6" height="2" viewBox="0 0 6 2"><path d="M.8 0Q2.500 1.500 4.500 0" stroke="#888" fill="none" /></svg>
        </Strip>
        <Actions>
          <Button>
            <svg width="7" height="10" viewBox="0 0 7 10"><path d="M6 1L2 5.200L6 9.400" stroke="#fff" strokeWidth="2.2" fill="none" /></svg>
            Outline
          </Button>
          <Button $danger><Trash />Delete</Button>
        </Actions>
        <TypeField>
          <Label>PAGETYPE</Label>
          <TypeSelect>Embedded iFrame<Caret c="#808080" /></TypeSelect>
        </TypeField>
        <Tabs>
          <Tab>General</Tab>
          <Tab $active>Contents</Tab>
          <Tab>Options</Tab>
        </Tabs>
        <Sheet>
          <Label>IFRAME URL</Label>
          <Input><span>https://public.tableau.com/views/CrimeinDC_0/Crimecapita</span></Input>
          <Label $top={10}>CAPTION</Label>
          <Input><span>Tableau test...</span></Input>
          <CheckRow><CheckBox /><Label>FULL WIDTH</Label></CheckRow>
          <ImageField label="BACKGROUND-IMAGE" />
          <ImageField label="THUMBNAIL" help />
        </Sheet>
      </Inspector>
    </Page>
  );
}
